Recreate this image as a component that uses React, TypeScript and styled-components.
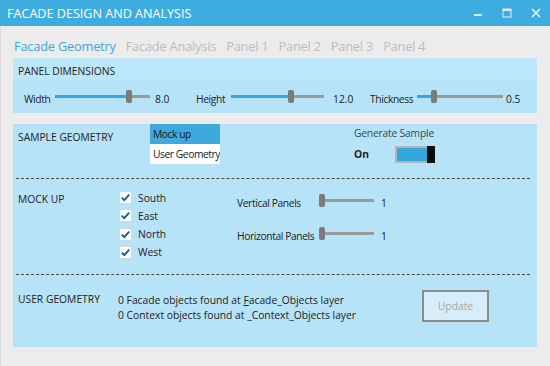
import React from "react";
import styled, { createGlobalStyle } from "styled-components";

const GlobalStyle = createGlobalStyle`
  html, body {
    margin: 0;
    padding: 0;
    background: #ececec;
  }
  body {
    font-family: "Open Sans", "Noto Sans", sans-serif;
    color: #222;
  }
  * {
    box-sizing: border-box;
  }
`;

const TEXT = "10.3px";

const Window = styled.div`
  width: 550px;
  height: 366px;
  display: flex;
  flex-direction: column;
  background: #ececec;
  overflow: hidden;
`;

const TitleBar = styled.div`
  height: 26px;
  flex-shrink: 0;
  display: flex;
  align-items: center;
  padding-left: 7px;
  background: #3dade0;
  color: #ffffff;
  font-size: 12.6px;
`;

const Controls = styled.div`
  margin-left: auto;
  display: flex;
  height: 100%;
`;

const ControlButton = styled.div`
  width: 29px;
  height: 100%;
  display: flex;
  align-items: center;
  justify-content: center;
`;

const Body = styled.div`
  flex: 1;
  display: flex;
  flex-direction: column;
  padding: 0 13px 0 12px;
  border-left: 1px solid #dadada;
`;

const Tabs = styled.div`
  height: 32px;
  display: flex;
  align-items: center;
  gap: 10px;
  padding: 8px 0 0 1px;
`;

const Tab = styled.span<{ $active?: boolean }>`
  font-size: 12.8px;
  color: ${(p) => (p.$active ? "#3ba7da" : "#bcbcbc")};
  letter-spacing: -0.2px;
`;

const Group = styled.div`
  background: #b7e3f8;
  display: flex;
  flex-direction: column;
`;

const DimGroup = styled(Group)`
  height: 55px;
`;

const GroupHeader = styled.div`
  height: 23px;
  display: flex;
  align-items: center;
  padding: 2px 0 0 5px;
  background: #bce6fa;
  font-size: ${TEXT};
  color: #222;
`;

const SliderRow = styled.div`
  flex: 1;
  display: flex;
  align-items: center;
  padding: 0 0 2px 11px;
`;

const Field = styled.div<{ $w?: number }>`
  display: flex;
  align-items: center;
  width: ${(p) => (p.$w ? `${p.$w}px` : "auto")};
`;

const Label = styled.span<{ $w?: number }>`
  display: inline-block;
  width: ${(p) => (p.$w ? `${p.$w}px` : "auto")};
  font-size: ${TEXT};
  letter-spacing: -0.4px;
  color: #222;
  white-space: nowrap;
  padding-top: 6px;
`;

const Value = styled.span<{ $gap: number }>`
  margin-left: ${(p) => p.$gap}px;
  font-size: ${TEXT};
  color: #222;
  padding-top: 6px;
`;

const Slider = styled.div<{ $w: number }>`
  width: ${(p) => p.$w}px;
  height: 14px;
  display: flex;
  align-items: center;
`;

const Fill = styled.div<{ $w: number }>`
  width: ${(p) => p.$w}px;
  height: 3px;
  background: #35a7de;
`;

const Rest = styled.div`
  flex: 1;
  height: 3px;
  background: #9a9a9a;
`;

const Thumb = styled.div`
  width: 6px;
  height: 13px;
  border-radius: 2px;
  background: #7b7b7b;
  flex-shrink: 0;
`;

const MainGroup = styled(Group)`
  margin-top: 11px;
  height: 223px;
`;

const Section = styled.div<{ $h: number }>`
  height: ${(p) => p.$h}px;
  display: flex;
  padding-left: 5px;
`;

const Divider = styled.div`
  margin: 0 7px 0 3px;
  border-top: 1px dashed #4a4a4a;
`;

const SectionTitle = styled.div<{ $top: number }>`
  width: 100px;
  padding-top: ${(p) => p.$top}px;
  font-size: ${TEXT};
  color: #222;
  white-space: nowrap;
`;

const Dropdown = styled.div`
  margin-left: 32px;
  width: 70px;
  display: flex;
  flex-direction: column;
  align-self: flex-start;
`;

const DropItem = styled.div<{ $selected?: boolean }>`
  height: 20px;
  display: flex;
  align-items: center;
  padding-left: 3px;
  font-size: ${TEXT};
  letter-spacing: -0.45px;
  color: #1a1a1a;
  white-space: nowrap;
  overflow: hidden;
  background: ${(p) => (p.$selected ? "#3ea9dc" : "#ffffff")};
`;

const Generate = styled.div`
  margin-left: 134px;
  padding-top: 1px;
  display: flex;
  flex-direction: column;
`;

const GenerateTitle = styled.div`
  font-size: ${TEXT};
  letter-spacing: -0.2px;
  color: #37474f;
  height: 16px;
  display: flex;
  align-items: center;
`;

const ToggleRow = styled.div`
  margin-top: 4px;
  display: flex;
  align-items: center;
  height: 18px;
`;

const OnText = styled.span`
  width: 41px;
  font-size: ${TEXT};
  font-weight: 700;
  color: #222;
`;

const Toggle = styled.div`
  width: 40px;
  height: 17px;
  display: flex;
`;

const ToggleTrack = styled.div`
  flex: 1;
  border: 2px solid #b4b4b4;
  border-right: none;
  background: #34a6de;
`;

const ToggleThumb = styled.div`
  width: 8px;
  background: #0a0a0a;
`;

const Checks = styled.div`
  margin-left: 1px;
  padding-top: 12px;
  display: flex;
  flex-direction: column;
  gap: 5.3px;
  width: 118px;
`;

const CheckRow = styled.div`
  height: 13px;
  display: flex;
  align-items: center;
  gap: 6px;
  font-size: ${TEXT};
  color: #222;
`;

const Box = styled.div`
  width: 13px;
  height: 13px;
  background: #ffffff;
  border: 1px solid #cfd7dc;
  display: flex;
  align-items: center;
  justify-content: center;
`;

const PanelSliders = styled.div`
  padding-top: 11px;
  display: flex;
  flex-direction: column;
  gap: 13px;
`;

const CountLabel = styled.span`
  width: 82px;
  font-size: ${TEXT};
  letter-spacing: -0.4px;
  color: #222;
  white-space: nowrap;
  padding-top: 6px;
`;

const Info = styled.div`
  padding-top: 18px;
  display: flex;
  flex-direction: column;
  font-size: ${TEXT};
  line-height: 15px;
  color: #222;
  width: 304px;
  white-space: nowrap;
`;

const UpdateButton = styled.button`
  margin-top: 15px;
  width: 67px;
  height: 32px;
  border: 2px solid #8d8d8d;
  background: #d5eefa;
  color: #a6a6a6;
  font-family: inherit;
  font-size: ${TEXT};
  padding: 0;
`;

function Check() {
  return (
    <Box>
      <svg width="11" height="11" viewBox="0 0 11 11">
        <path d="M1.8 5.6 L4.3 8.1 L9.2 2.6" fill="none" stroke="#1b5e8f" strokeWidth="2" />
      </svg>
    </Box>
  );
}

function Track({ w, fill }: { w: number; fill: number }) {
  return (
    <Slider $w={w}>
      {fill > 0 && <Fill $w={fill} />}
      <Thumb />
      <Rest />
    </Slider>
  );
}

export default function App() {
  return (
    <Window>
      <GlobalStyle />
      <TitleBar>
        FACADE DESIGN AND ANALYSIS
        <Controls>
          <ControlButton>
            <svg width="10" height="10" viewBox="0 0 10 10">
              <rect x="1" y="6" width="8" height="2" fill="#dceff9" />
            </svg>
          </ControlButton>
          <ControlButton>
            <svg width="10" height="10" viewBox="0 0 10 10">
              <rect x="1" y="1" width="8" height="8" fill="none" stroke="#dceff9" strokeWidth="1" />
              <rect x="1" y="1" width="8" height="2" fill="#dceff9" />
            </svg>
          </ControlButton>
          <ControlButton>
            <svg width="10" height="10" viewBox="0 0 10 10">
              <path d="M1 1 L9 9 M9 1 L1 9" stroke="#e6f4fb" strokeWidth="1.6" />
            </svg>
          </ControlButton>
        </Controls>
      </TitleBar>
      <Body>
        <Tabs>
          <Tab $active>Facade Geometry</Tab>
          <Tab>Facade Analysis</Tab>
          <Tab>Panel 1</Tab>
          <Tab>Panel 2</Tab>
          <Tab>Panel 3</Tab>
          <Tab>Panel 4</Tab>
        </Tabs>
        <DimGroup>
          <GroupHeader>PANEL DIMENSIONS</GroupHeader>
          <SliderRow>
            <Field $w={172}>
              <Label $w={31}>Width</Label>
              <Track w={95} fill={71} />
              <Value $gap={5}>8.0</Value>
            </Field>
            <Field $w={174}>
              <Label $w={35}>Height</Label>
              <Track w={93} fill={57} />
              <Value $gap={9}>12.0</Value>
            </Field>
            <Field>
              <Label $w={47}>Thickness</Label>
              <Track w={86} fill={14} />
              <Value $gap={3}>0.5</Value>
            </Field>
          </SliderRow>
        </DimGroup>
        <MainGroup>
          <Section $h={54}>
            <SectionTitle $top={6}>SAMPLE GEOMETRY</SectionTitle>
            <Dropdown>
              <DropItem $selected>Mock up</DropItem>
              <DropItem>User Geometry</DropItem>
            </Dropdown>
            <Generate>
              <GenerateTitle>Generate Sample</GenerateTitle>
              <ToggleRow>
                <OnText>On</OnText>
                <Toggle>
                  <ToggleTrack />
                  <ToggleThumb />
                </Toggle>
              </ToggleRow>
            </Generate>
          </Section>
          <Divider />
          <Section $h={95}>
            <SectionTitle $top={13}>MOCK UP</SectionTitle>
            <Checks>
              <CheckRow><Check />South</CheckRow>
              <CheckRow><Check />East</CheckRow>
              <CheckRow><Check />North</CheckRow>
              <CheckRow><Check />West</CheckRow>
            </Checks>
            <PanelSliders>
              <Field>
                <CountLabel>Vertical Panels</CountLabel>
                <Track w={55} fill={0} />
                <Value $gap={7}>1</Value>
              </Field>
              <Field>
                <CountLabel>Horizontal Panels</CountLabel>
                <Track w={55} fill={0} />
                <Value $gap={7}>1</Value>
              </Field>
            </PanelSliders>
          </Section>
          <Divider />
          <Section $h={72}>
            <SectionTitle $top={17}>USER GEOMETRY</SectionTitle>
            <Info>
              <span>
                0 Facade objects found at <u>F</u>acade_Objects layer
              </span>
              <span>0 Context objects found at _Context_Objects layer</span>
            </Info>
            <UpdateButton>Update</UpdateButton>
          </Section>
        </MainGroup>
      </Body>
    </Window>
  );
}
